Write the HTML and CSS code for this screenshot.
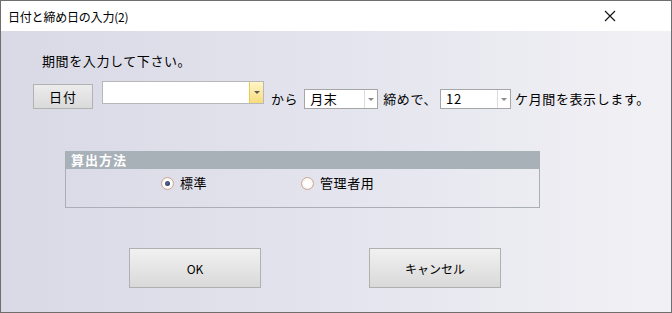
FILE: index.html
```html
<!DOCTYPE html>
<html lang="ja">
<head>
    <meta charset="UTF-8">
    <meta name="viewport" content="width=device-width, initial-scale=1.0">
    <title>日付と締め日の入力(2)</title>
    <link rel="stylesheet" href="styles.css">
</head>
<body>
    <div class="window">
        <div class="titlebar">
            <span class="title">日付と締め日の入力(2)</span>
            <svg class="close" width="12" height="12" viewBox="0 0 12 12">
                <path d="M1 1 L11 11 M11 1 L1 11" stroke="#111" stroke-width="1.1" fill="none"/>
            </svg>
        </div>

        <div class="content">
            <p class="prompt">期間を入力して下さい。</p>

            <div class="period-row">
                <button class="btn-date">日付</button>
                <div class="combo combo-date">
                    <span class="combo-text"></span>
                    <span class="combo-arrow yellow"><i></i></span>
                </div>
                <span class="label label-kara">から</span>
                <div class="combo combo-small combo-end">
                    <span class="combo-text">月末</span>
                    <span class="combo-arrow"><i></i></span>
                </div>
                <span class="label label-shime">締めで、</span>
                <div class="combo combo-small combo-months">
                    <span class="combo-text">12</span>
                    <span class="combo-arrow"><i></i></span>
                </div>
                <span class="label label-tail">ケ月間を表示します。</span>
            </div>

            <div class="group">
                <div class="group-header">算出方法</div>
                <div class="group-body">
                    <label class="radio radio-std"><span class="radio-dot checked"></span>標準</label>
                    <label class="radio radio-admin"><span class="radio-dot"></span>管理者用</label>
                </div>
            </div>

            <div class="actions">
                <button class="btn-action">OK</button>
                <button class="btn-action">キャンセル</button>
            </div>
        </div>
    </div>
</body>
</html>
```

FILE: styles.css
```css
* {
    box-sizing: border-box;
}

body {
    margin: 0;
    font-family: "Noto Sans CJK JP", "Noto Sans", sans-serif;
    color: #000;
}

.window {
    width: 672px;
    height: 313px;
    border: 1px solid #6e6e6e;
    display: flex;
    flex-direction: column;
    overflow: hidden;
}

.titlebar {
    height: 30px;
    background: #fff;
    display: flex;
    align-items: center;
    justify-content: space-between;
    padding: 0 55px 0 7px;
}

.title {
    font-size: 12px;
    letter-spacing: -0.2px;
}

.close {
    display: block;
}

.content {
    flex: 1;
    background: linear-gradient(to right, #d9d9e6, #e4e4ee 50%, #f1f1f5);
    padding: 21px 0 0 0;
}

.prompt {
    margin: 0 0 11px 41px;
    font-size: 13px;
    line-height: 18px;
    letter-spacing: 0.6px;
}

.period-row {
    display: flex;
    align-items: flex-start;
    height: 28px;
    padding-left: 32px;
}

.btn-date {
    margin-top: 3px;
    width: 60px;
    height: 25px;
    font-family: inherit;
    font-size: 13px;
    letter-spacing: 1px;
    border: 1px solid #b2b2b2;
    background: linear-gradient(#ececec, #dadada);
    padding: 0;
}

.combo {
    display: flex;
    background: #fff;
    border: 1px solid #b8b8b8;
}

.combo-date {
    margin-left: 9px;
    width: 162px;
    height: 23px;
}

.combo-small {
    margin-top: 8px;
    height: 20px;
    border-color: #a6a6a6;
}

.combo-end {
    width: 74px;
}

.combo-months {
    width: 71px;
}

.combo-text {
    flex: 1;
    font-size: 13px;
    line-height: 18px;
    padding-left: 5px;
    letter-spacing: 0.6px;
}

.combo-arrow {
    width: 13px;
    display: flex;
    align-items: center;
    justify-content: center;
    border-left: 1px solid #dcdcdc;
}

.combo-arrow i {
    width: 0;
    height: 0;
    border-left: 3px solid transparent;
    border-right: 3px solid transparent;
    border-top: 3px solid #8a8a8a;
}

.combo-arrow.yellow {
    width: 14px;
    border-left: 1px solid #edc75a;
    background: linear-gradient(#fff6c8, #f7dc7c);
}

.combo-arrow.yellow i {
    border-top-color: #5a5a5a;
}

.label {
    margin-top: 8px;
    font-size: 13px;
    line-height: 20px;
    letter-spacing: 0.6px;
    white-space: nowrap;
}

.label-kara {
    margin: 8px 6px 0 7px;
}

.label-shime {
    margin: 8px 3px 0 5px;
}

.label-tail {
    margin-left: 4px;
}

.group {
    margin: 42px 0 0 64px;
    width: 475px;
    height: 57px;
    border: 1px solid #a9afb5;
    border-top: none;
}

.group-header {
    height: 18px;
    background: #a8b0b8;
    color: #fff;
    font-weight: bold;
    font-size: 13px;
    line-height: 18px;
    padding-left: 5px;
    letter-spacing: 1px;
}

.group-body {
    display: flex;
    padding: 6px 0 0 95px;
}

.radio {
    display: flex;
    align-items: center;
    font-size: 13px;
    line-height: 16px;
    letter-spacing: 0.6px;
}

.radio-std {
    width: 140px;
}

.radio-dot {
    width: 13px;
    height: 13px;
    border-radius: 50%;
    border: 1px solid #c9a896;
    background: radial-gradient(circle, #ffffff 40%, #f1e6dc);
    margin-right: 6px;
    display: flex;
    align-items: center;
    justify-content: center;
}

.radio-dot.checked::after {
    content: "";
    width: 5px;
    height: 5px;
    border-radius: 50%;
    background: radial-gradient(circle at 40% 40%, #5a6e9a, #1e2b48);
}

.actions {
    display: flex;
    gap: 108px;
    margin: 40px 0 0 128px;
}

.btn-action {
    width: 132px;
    height: 40px;
    font-family: inherit;
    font-size: 12px;
    border: 1px solid #b0b0b0;
    background: linear-gradient(#f1f1f1, #d9d9d9);
    padding: 0;
}
```
